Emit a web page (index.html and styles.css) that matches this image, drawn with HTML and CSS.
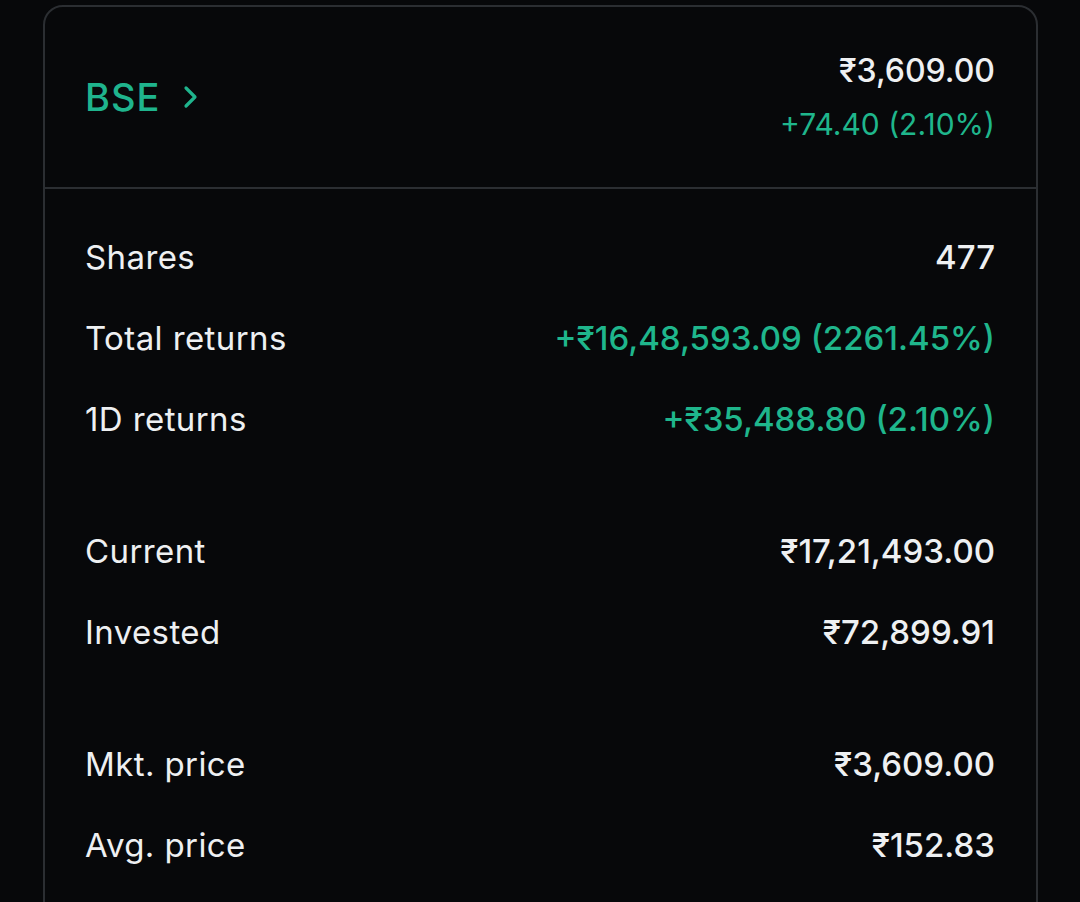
FILE: index.html
```html
<!DOCTYPE html>
<html>
<head>
<meta charset="utf-8">
<link rel="stylesheet" href="styles.css">
</head>
<body>
<div class="card">
  <div class="header">
    <div class="name">BSE
      <svg class="chev" width="18" height="26" viewBox="0 0 18 26"><path d="M4 4 L13 13 L4 22" fill="none" stroke="#1fb48d" stroke-width="3.2" stroke-linecap="round" stroke-linejoin="round"/></svg>
    </div>
    <div class="quote">
      <div class="price">₹3,609.00</div>
      <div class="change green">+74.40 (2.10%)</div>
    </div>
  </div>
  <div class="body">
    <div class="group">
      <div class="row"><span class="label">Shares</span><span class="value">477</span></div>
      <div class="row"><span class="label">Total returns</span><span class="value green">+₹16,48,593.09 (2261.45%)</span></div>
      <div class="row"><span class="label">1D returns</span><span class="value green">+₹35,488.80 (2.10%)</span></div>
    </div>
    <div class="group">
      <div class="row"><span class="label">Current</span><span class="value">₹17,21,493.00</span></div>
      <div class="row"><span class="label">Invested</span><span class="value">₹72,899.91</span></div>
    </div>
    <div class="group">
      <div class="row"><span class="label">Mkt. price</span><span class="value">₹3,609.00</span></div>
      <div class="row"><span class="label">Avg. price</span><span class="value">₹152.83</span></div>
    </div>
  </div>
</div>
</body>
</html>
```
FILE: styles.css
```css
html, body {
  margin: 0;
  padding: 0;
  background: #07080a;
  height: 902px;
  overflow: hidden;
}
body {
  font-family: Inter, "Noto Sans", sans-serif;
  color: #eef0f2;
  padding: 5px 43px 0 43px;
}
.card {
  width: 991px;
  border: 2px solid #2b2e32;
  border-radius: 20px;
  background: #07080a;
  height: 1000px;
}
.header {
  height: 180px;
  display: flex;
  align-items: center;
  justify-content: space-between;
  padding: 0 41px 0 40px;
  border-bottom: 2px solid #2b2e32;
}
.name {
  display: flex;
  align-items: center;
  gap: 22px;
  color: #1fb48d;
  font-size: 38px;
  font-weight: 500;
  letter-spacing: 1px;
}
.chev { margin-top: 0px; }
.quote {
  display: flex;
  flex-direction: column;
  align-items: flex-end;
  gap: 13px;
}
.price {
  font-size: 32px;
  font-weight: 500;
  line-height: 40px;
}
.change {
  font-size: 30px;
  line-height: 40px;
}
.green { color: #1fb68c; }
.body {
  padding: 27px 41px 0 40px;
  display: flex;
  flex-direction: column;
  gap: 51px;
}
.row {
  height: 81px;
  display: flex;
  align-items: center;
  justify-content: space-between;
  font-size: 33px;
}
.label { font-weight: 400; letter-spacing: 0.4px; }
.value { font-weight: 500; }
```
